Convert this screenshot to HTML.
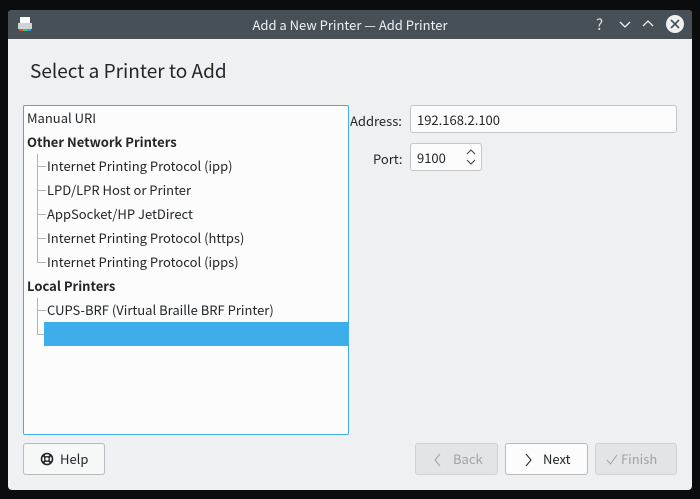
<!DOCTYPE html>
<html><head><style>
body{margin:0;width:700px;height:499px;background:#0b0c0d;font-family:"Noto Sans CJK SC","Liberation Sans",sans-serif;font-size:13px;color:#232629;position:relative;overflow:hidden}
.win{position:absolute;left:8px;top:10px;width:684px;height:480px;background:#eff0f1;border-radius:4px;overflow:hidden}
.tb{position:absolute;left:0;top:0;width:684px;height:29px;background:#475057;color:#eff0f1;font-size:13px}
.tb .t{position:absolute;left:0;width:684px;top:5px;text-align:center}
.a{position:absolute;white-space:nowrap}
.tree{position:absolute;left:15px;top:95px;width:324px;height:328px;background:#fcfcfc;border:1px solid #3daee9;border-radius:2px}
.row{position:absolute;height:24px;line-height:24px;white-space:nowrap}
.b{font-weight:bold}
.vl{position:absolute;border-left:1px solid #b0b3b6}
.hl{position:absolute;border-top:1px solid #b0b3b6;width:9px}
.inp{position:absolute;background:#fcfcfc;border:1px solid #c3c5c7;border-radius:3px;height:28px;line-height:28px;padding-left:6px;box-sizing:border-box}
.btn{position:absolute;height:32px;box-sizing:border-box;border:1px solid #b9bbbd;border-radius:3px;background:#f6f7f7;line-height:30px}
.btn svg{position:absolute}
.btn span{position:absolute;top:0}
.dis{background:#e3e4e5;color:#a0a3a6;border-color:#cfd1d2}
</style></head><body>
<div class="win">
<div class="tb"><div class="t">Add a New Printer — Add Printer</div>
<svg class="a" style="left:9px;top:6px" width="16" height="16"><rect x="3" y="1" width="10" height="6" fill="#fff"/><rect x="1" y="7" width="14" height="6" fill="#d0d3d6"/><rect x="2" y="13" width="4" height="2" fill="#e74c3c"/><rect x="6" y="13" width="4" height="2" fill="#2ecc71"/><rect x="10" y="13" width="4" height="2" fill="#3498db"/></svg>
<div class="a" style="left:588px;top:4px;font-size:15px;color:#dfe1e3">?</div>
<svg class="a" style="left:611px;top:9px" width="12" height="10"><path d="M1 3 L6 8 L11 3" stroke="#eff0f1" fill="none" stroke-width="1.3"/></svg>
<svg class="a" style="left:634px;top:9px" width="12" height="10"><path d="M1 7 L6 2 L11 7" stroke="#eff0f1" fill="none" stroke-width="1.3"/></svg>
<svg class="a" style="left:657px;top:4px" width="20" height="20"><circle cx="10" cy="10" r="9" fill="#eff0f1"/><path d="M6 6 L14 14 M14 6 L6 14" stroke="#475057" stroke-width="1.6"/></svg>
</div>
<div class="a" style="left:22px;top:47px;font-size:19px">Select a Printer to Add</div>
<div class="tree">
<div class="row" style="left:3px;top:0">Manual URI</div>
<div class="row b" style="left:3px;top:24px">Other Network Printers</div>
<div class="vl" style="left:13px;top:48px;height:109px"></div>
<div class="hl" style="left:13px;top:60px"></div><div class="hl" style="left:13px;top:84px"></div><div class="hl" style="left:13px;top:108px"></div><div class="hl" style="left:13px;top:132px"></div><div class="hl" style="left:13px;top:156px"></div>
<div class="row" style="left:23px;top:48px">Internet Printing Protocol (ipp)</div>
<div class="row" style="left:23px;top:72px">LPD/LPR Host or Printer</div>
<div class="row" style="left:23px;top:96px">AppSocket/HP JetDirect</div>
<div class="row" style="left:23px;top:120px">Internet Printing Protocol (https)</div>
<div class="row" style="left:23px;top:144px">Internet Printing Protocol (ipps)</div>
<div class="row b" style="left:3px;top:168px">Local Printers</div>
<div class="vl" style="left:13px;top:192px;height:37px"></div>
<div class="hl" style="left:13px;top:204px"></div><div class="hl" style="left:13px;top:228px"></div>
<div class="row" style="left:23px;top:192px">CUPS-BRF (Virtual Braille BRF Printer)</div>
<div class="row" style="left:20px;top:216px;width:304px;background:#3daee9"></div>
</div>
<div class="a" style="left:342px;top:101px">Address:</div>
<div class="inp" style="left:402px;top:95px;width:267px">192.168.2.100</div>
<div class="a" style="left:365px;top:139px">Port:</div>
<div class="inp" style="left:402px;top:133px;width:72px">9100</div>
<svg class="a" style="left:457px;top:138px" width="12" height="18"><path d="M2 6 L6 2 L10 6 M2 12 L6 16 L10 12" stroke="#3b3e41" fill="none"/></svg>
<div class="btn" style="left:15px;top:433px;width:82px">
<svg style="left:16px;top:8px" width="14" height="14" viewBox="0 0 14 14"><circle cx="7" cy="7" r="5.5" fill="none" stroke="#232629" stroke-width="1.6"/><circle cx="7" cy="7" r="2.3" fill="none" stroke="#232629" stroke-width="1.3"/><path d="M3 3 L5.3 5.3 M11 3 L8.7 5.3 M3 11 L5.3 8.7 M11 11 L8.7 8.7" stroke="#232629" stroke-width="2"/></svg>
<span style="left:36px">Help</span></div>
<div class="btn dis" style="left:407px;top:433px;width:83px">
<svg style="left:18px;top:9px" width="8" height="14"><path d="M6 1 L1 7 L6 13" stroke="#a0a3a6" fill="none"/></svg><span style="left:37px">Back</span></div>
<div class="btn" style="left:497px;top:433px;width:83px;background:#fcfcfc">
<svg style="left:18px;top:9px" width="8" height="14"><path d="M2 1 L7 7 L2 13" stroke="#232629" fill="none"/></svg><span style="left:37px">Next</span></div>
<div class="btn dis" style="left:587px;top:433px;width:82px">
<svg style="left:10px;top:10px" width="12" height="12"><path d="M1 6 L4.5 10 L11 1" stroke="#a0a3a6" fill="none"/></svg><span style="left:25px">Finish</span></div>
</div>
</body></html>
